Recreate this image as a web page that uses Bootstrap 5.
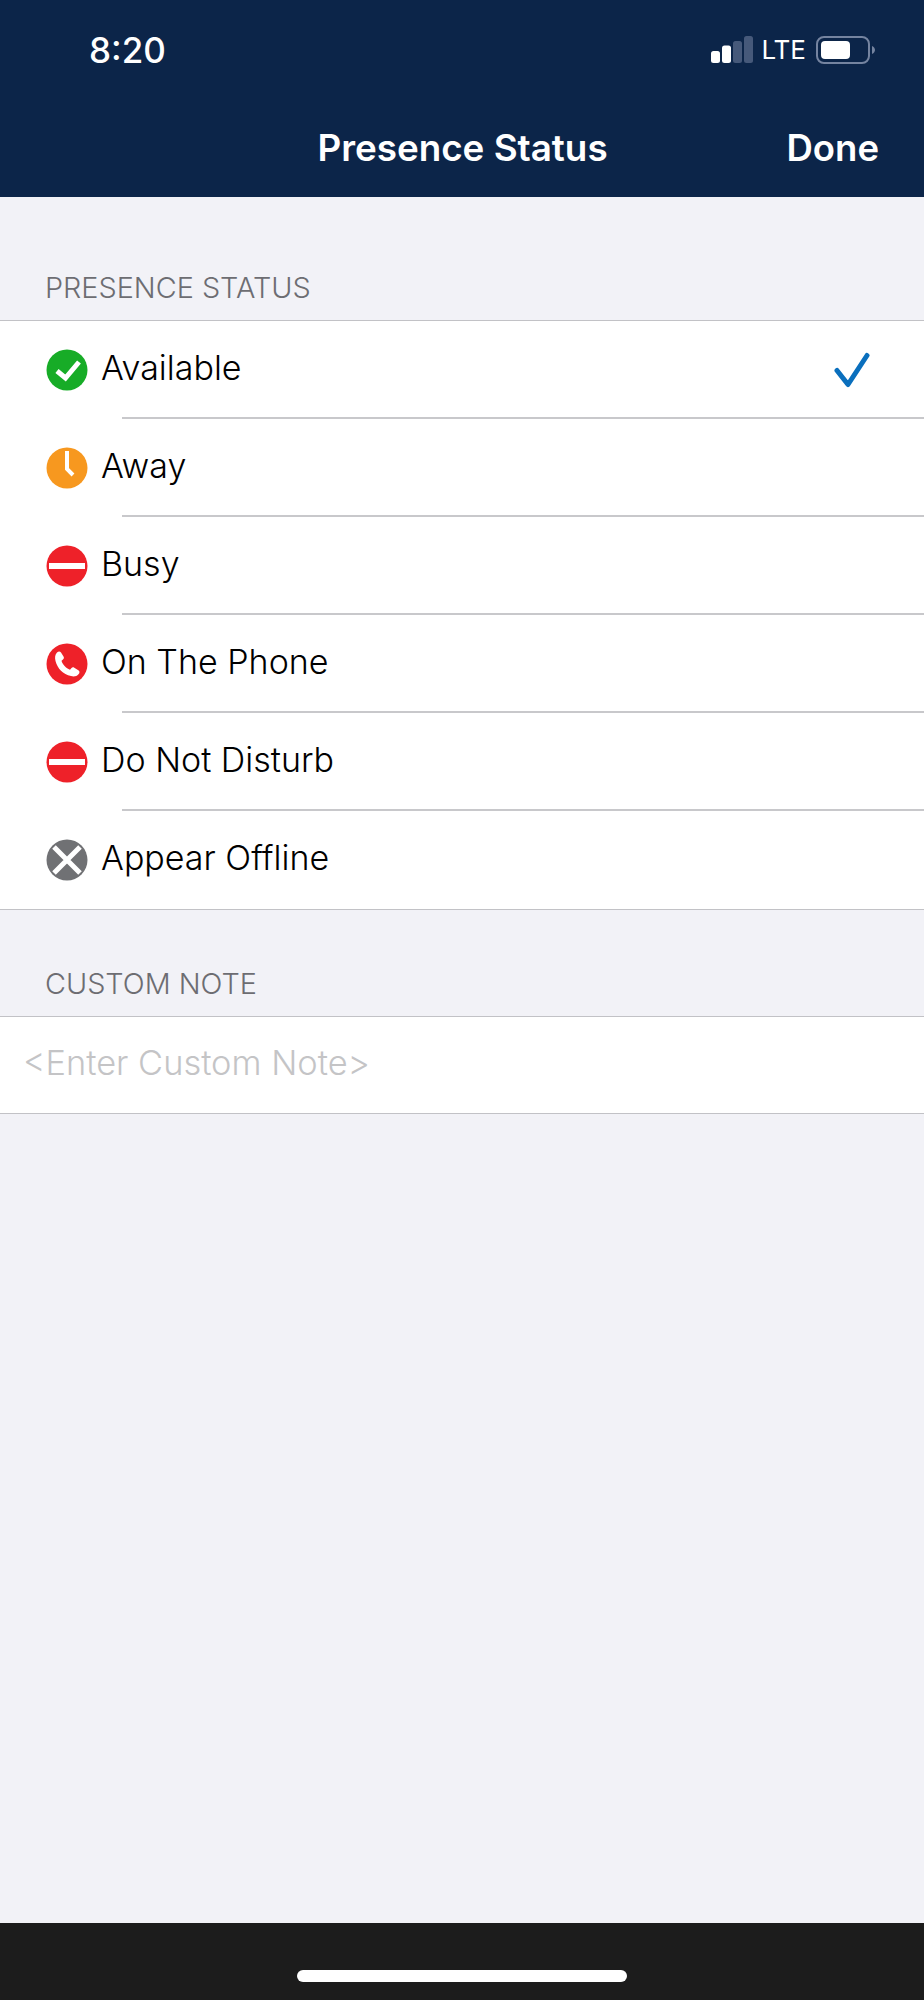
<!DOCTYPE html>
<html lang="en">

<head>
  <meta charset="UTF-8">
  <meta name="viewport" content="width=device-width, initial-scale=1.0">
  <title>Presence Status</title>
  <link href="https://cdn.jsdelivr.net/npm/bootstrap@5.3.3/dist/css/bootstrap.min.css" rel="stylesheet">
  <style>
    body {
      background-color: #f2f2f7;
      font-family: "Inter", "Liberation Sans", sans-serif;
      height: 2000px;
    }

    .app-screen {
      height: 2000px;
    }

    /* header */
    .top-header {
      background-color: #0c2549;
      height: 197px;
      color: #fff;
    }

    .status-row {
      height: 100px;
      padding: 0 48px 0 89px;
    }

    .status-time {
      font-size: 35px;
      font-weight: 500;
      line-height: 1;
    }

    .status-lte {
      font-size: 26px;
      font-weight: 400;
      line-height: 1;
      margin: 0 10px 0 8px;
    }

    .title-row {
      display: grid;
      grid-template-columns: 1fr auto 1fr;
      height: 96px;
      padding: 0 45px 0 46px;
    }

    .title-text {
      font-size: 36.8px;
      font-weight: 600;
      line-height: 1;
    }

    .done-link {
      font-size: 36.5px;
      font-weight: 600;
      line-height: 1;
      color: #fff;
      text-decoration: none;
      justify-self: end;
    }

    /* grouped list */
    .section-label {
      color: #6d6d72;
      font-size: 28.8px;
      font-weight: 300;
      line-height: 1;
      padding-left: 45px;
    }

    .label-first {
      padding-top: 77px;
      padding-bottom: 17px;
    }

    .label-second {
      padding-top: 60px;
      padding-bottom: 17px;
    }

    .status-list {
      border-top: 1.5px solid #c2c2c6;
      border-bottom: 1.5px solid #c2c2c6;
      border-radius: 0;
    }

    .status-item {
      height: 98px;
      padding: 0 0 0 46px;
      border: 0;
      gap: 13px;
      font-size: 34px;
      font-weight: 300;
      color: #000;
    }

    .item-text {
      margin-top: -4px;
    }

    .status-item + .status-item::before {
      content: "";
      position: absolute;
      top: -1.5px;
      left: 122px;
      right: 0;
      height: 1.5px;
      background-color: #c8c8cb;
    }

    .status-icon {
      width: 42px;
      height: 42px;
      flex-shrink: 0;
    }

    .status-check {
      width: 38px;
      height: 38px;
      margin-right: 52px;
    }

    .note-input {
      height: 96px;
      padding: 0 0 4px 23px;
      border: 0;
      border-radius: 0;
      font-size: 34.4px;
      font-weight: 300;
      background: #fff;
    }

    .note-input::placeholder {
      color: #c4c4c6;
      opacity: 1;
    }

    /* home bar */
    .home-area {
      background-color: #1c1c1c;
      height: 77px;
    }

    .home-pill {
      width: 330px;
      height: 12px;
      border-radius: 6px;
      background-color: #fff;
      margin-bottom: 18px;
    }
  </style>
</head>

<body>
  <div class="app-screen d-flex flex-column">
    <header class="top-header flex-shrink-0">
      <div class="status-row d-flex align-items-center justify-content-between">
        <span class="status-time">8:20</span>
        <div class="d-flex align-items-center">
          <svg width="42" height="28" viewBox="0 0 42 28">
            <rect x="0" y="15" width="9" height="12" rx="2.5" fill="#fff" />
            <rect x="11" y="9.5" width="9" height="17.5" rx="2.5" fill="#fff" />
            <rect x="22" y="5" width="9" height="22" rx="2.5" fill="#46597a" />
            <rect x="33" y="0" width="9" height="27" rx="2.5" fill="#46597a" />
          </svg>
          <span class="status-lte">LTE</span>
          <svg width="60" height="28" viewBox="0 0 60 28">
            <rect x="1" y="1" width="52" height="26" rx="7" fill="none" stroke="#7584a0" stroke-width="2" />
            <rect x="5" y="5" width="29" height="18" rx="4" fill="#fff" />
            <path d="M56 10c2 1 3 2.500 3 4s-1 3-3 4z" fill="#7584a0" />
          </svg>
        </div>
      </div>
      <div class="title-row align-items-center">
        <span></span>
        <span class="title-text">Presence Status</span>
        <a href="#" class="done-link">Done</a>
      </div>
    </header>

    <main class="flex-grow-1">
      <div class="section-label label-first">PRESENCE STATUS</div>
      <ul class="list-group status-list">
        <li class="list-group-item status-item d-flex align-items-center">
          <svg class="status-icon" viewBox="0 0 42 42">
            <circle cx="21" cy="21" r="20.500" fill="#17ac27" />
            <path d="M11 22l8.500 7L33 13" fill="none" stroke="#fff" stroke-width="5" />
          </svg>
          <span class="item-text flex-grow-1">Available</span>
          <svg class="status-check" viewBox="0 0 38 38">
            <path d="M3 19.500l11 14 19-29" fill="none" stroke="#0a6fbd" stroke-width="5" stroke-linecap="round" stroke-linejoin="round" />
          </svg>
        </li>
        <li class="list-group-item status-item d-flex align-items-center">
          <svg class="status-icon" viewBox="0 0 42 42">
            <circle cx="21" cy="21" r="20.500" fill="#f7981f" />
            <path d="M21 4v18l6 6" fill="none" stroke="#fff" stroke-width="4" />
          </svg>
          <span class="item-text">Away</span>
        </li>
        <li class="list-group-item status-item d-flex align-items-center">
          <svg class="status-icon" viewBox="0 0 42 42">
            <circle cx="21" cy="21" r="20.500" fill="#ee2129" />
            <rect x="3" y="18" width="36" height="6" fill="#fff" />
          </svg>
          <span class="item-text">Busy</span>
        </li>
        <li class="list-group-item status-item d-flex align-items-center">
          <svg class="status-icon" viewBox="0 0 42 42">
            <circle cx="21" cy="21" r="20.500" fill="#ee2129" />
            <path transform="translate(1 1)" d="M10 8.500c1.500-1.500 3-1.500 4 0l2.500 4c.7 1.200.5 2.200-.5 3l-1.500 1.200c1 3.800 4.500 7.500 8.500 9l1.300-1.500c.9-1 1.900-1.100 3-.5l4 2.500c1.500 1 1.600 2.500.2 4-1.800 2-4.500 2.800-7.500 1.800C16 30.500 10.500 24.500 8.500 17 7.700 13.500 8 10.500 10 8.500z" fill="#fff" />
          </svg>
          <span class="item-text">On The Phone</span>
        </li>
        <li class="list-group-item status-item d-flex align-items-center">
          <svg class="status-icon" viewBox="0 0 42 42">
            <circle cx="21" cy="21" r="20.500" fill="#ee2129" />
            <rect x="3" y="18" width="36" height="6" fill="#fff" />
          </svg>
          <span class="item-text">Do Not Disturb</span>
        </li>
        <li class="list-group-item status-item d-flex align-items-center">
          <svg class="status-icon" viewBox="0 0 42 42">
            <circle cx="21" cy="21" r="20.500" fill="#707174" />
            <path d="M8 8l26 26M34 8L8 34" fill="none" stroke="#fff" stroke-width="5" />
          </svg>
          <span class="item-text">Appear Offline</span>
        </li>
      </ul>

      <div class="section-label label-second">CUSTOM NOTE</div>
      <div class="status-list">
        <input type="text" class="form-control note-input" placeholder="&lt;Enter Custom Note&gt;">
      </div>
    </main>

    <footer class="home-area flex-shrink-0 d-flex justify-content-center align-items-end">
      <div class="home-pill"></div>
    </footer>
  </div>

  <script src="https://cdn.jsdelivr.net/npm/bootstrap@5.3.3/dist/js/bootstrap.bundle.min.js"></script>
</body>

</html>
